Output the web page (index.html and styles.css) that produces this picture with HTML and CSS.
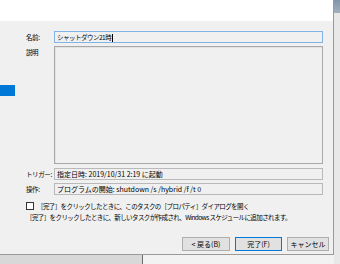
FILE: index.html
```html
<!DOCTYPE html>
<html>
<head>
    <meta charset='utf-8'>
    <title>タスクの作成</title>
    <link rel="stylesheet" href="styles.css">
</head>
<body>
    <div class="ekran">
        <div class="okno">
            <div class="okno-gora"></div>
            <div class="okno-srodek">
                <div class="nawigacja">
                    <div class="nawigacja-pozycja aktywna"></div>
                </div>
                <div class="formularz">
                    <div class="wiersz">
                        <span class="etykieta">名前:</span>
                        <div class="pole pole-aktywne">シャットダウン21時<span class="kursor"></span></div>
                    </div>
                    <div class="wiersz wiersz-opis">
                        <span class="etykieta">説明</span>
                        <div class="pole pole-opis"></div>
                    </div>
                    <div class="wiersz wiersz-info">
                        <span class="etykieta">トリガー:</span>
                        <div class="pole">指定日時: 2019/10/31 2:19 に起動</div>
                    </div>
                    <div class="wiersz wiersz-info">
                        <span class="etykieta">操作:</span>
                        <div class="pole">プログラムの開始: shutdown /s /hybrid /f /t 0</div>
                    </div>
                    <label class="wybor">
                        <span class="kwadrat"></span>
                        <span>［完了］をクリックしたときに、このタスクの［プロパティ］ダイアログを開く</span>
                    </label>
                    <p class="uwaga">［完了］をクリックしたときに、新しいタスクが作成され、Windows スケジュールに追加されます。</p>
                    <div class="przyciski">
                        <button class="wstecz">&lt; 戻る(B)</button>
                        <button class="glowny">完了(F)</button>
                        <button class="anuluj">キャンセル</button>
                    </div>
                </div>
            </div>
        </div>
        <div class="tlo-prawe">
            <div class="tlo-pasek"></div>
        </div>
        <div class="tlo-dolne">
            <div class="tlo-dolne-lewe"></div>
            <div class="tlo-dolne-prawe"></div>
        </div>
        <div class="tlo-rog"></div>
    </div>
</body>
</html>
```

FILE: styles.css
```css
html, body {
    margin: 0;
    background-color: #f0f0f0;
    font-family: "Noto Sans CJK JP", sans-serif;
    font-size: 6.5px;
    color: #000;
}
.ekran {
    display: grid;
    grid-template-columns: 334px 6px;
    grid-template-rows: 255px 9px;
    width: 340px;
    height: 264px;
    overflow: hidden;
}
.okno {
    background-color: #f0f0f0;
    border-right: 1px solid #9a9a9a;
    border-bottom: 1px solid #9a9a9a;
    display: flex;
    flex-direction: column;
}
.okno-gora {
    height: 21px;
    background-color: #ffffff;
}
.okno-srodek {
    display: flex;
    flex: 1;
}
.nawigacja {
    width: 15px;
    padding-top: 64px;
}
.nawigacja-pozycja.aktywna {
    height: 11px;
    background-color: #0078d7;
}
.formularz {
    flex: 1;
    padding: 10px 10px 0 11px;
    display: flex;
    flex-direction: column;
}
.wiersz {
    display: flex;
    align-items: center;
    height: 12px;
}
.etykieta {
    width: 28px;
    letter-spacing: -0.4px;
}
.pole {
    flex: 1;
    box-sizing: border-box;
    height: 12px;
    border: 1px solid #b9b9b9;
    background-color: #f0f0f0;
    padding-left: 2px;
    line-height: 10px;
    font-size: 7px;
    white-space: nowrap;
}
.pole-aktywne {
    border-color: #80b3e6;
    font-size: 6.5px;
    letter-spacing: -0.5px;
}
.kursor {
    display: inline-block;
    width: 1px;
    height: 8px;
    background-color: #000;
    vertical-align: middle;
    margin-left: 1px;
}
.wiersz-opis {
    margin-top: 3px;
    height: 118px;
    align-items: flex-start;
}
.wiersz-opis .etykieta {
    margin-top: 1px;
}
.pole-opis {
    height: 118px;
    border: 1px solid #a8a8a8;
    box-shadow: inset 1px 1px 0 #e2e2e2;
}
.wiersz-info {
    margin-top: 4px;
}
.wiersz-info + .wiersz-info {
    margin-top: 3px;
}
.wybor {
    display: flex;
    align-items: center;
    gap: 3px;
    margin-top: 7px;
    height: 8px;
    letter-spacing: -0.6px;
}
.kwadrat {
    width: 6px;
    height: 6px;
    border: 1px solid #333;
    background-color: #fff;
}
.uwaga {
    margin: 3px 0 0;
    height: 8px;
    line-height: 8px;
    letter-spacing: -0.6px;
}
.przyciski {
    display: flex;
    justify-content: flex-end;
    gap: 5px;
    margin: 16px -6px 0 0;
}
button {
    box-sizing: border-box;
    height: 14px;
    padding: 0;
    border: 1px solid #adadad;
    background-color: #e1e1e1;
    font-family: inherit;
    font-size: 7px;
    color: #000;
}
button.wstecz {
    width: 48px;
}
button.glowny {
    width: 47px;
    border-color: #0078d7;
}
button.anuluj {
    width: 42px;
}
.tlo-prawe {
    background-color: #e8e8e8;
}
.tlo-pasek {
    height: 13px;
    background: linear-gradient(#8093a8, #a3b0bf);
}
.tlo-dolne {
    display: flex;
    background-color: #dcdcdc;
}
.tlo-dolne-lewe {
    width: 142px;
    border-right: 1px solid #6b6b6b;
    background-color: #d8d8d8;
}
.tlo-dolne-prawe {
    flex: 1;
    background-color: #f2f2f2;
}
.tlo-rog {
    background-color: #e8e8e8;
}
```
